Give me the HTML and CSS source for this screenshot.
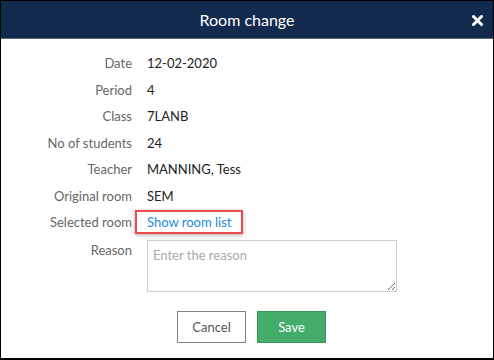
FILE: index.html
```html
<!DOCTYPE html>
<html lang="en">
<head>
    <meta charset="UTF-8">
    <title>Room change</title>
    <link rel="stylesheet" href="styles.css">
</head>
<body>

<div class="dialog">
    <div class="header">
        <h2>Room change</h2>
        <span class="close">
            <svg width="11" height="11" viewBox="0 0 11 11">
                <path d="M1.5 1.5 L9.5 9.5 M9.5 1.5 L1.5 9.5" stroke="#fff" stroke-width="3" stroke-linecap="round"/>
            </svg>
        </span>
    </div>
    <form class="details">
        <div class="label">Date</div>
        <div class="value">12-02-2020</div>
        <div class="label">Period</div>
        <div class="value">4</div>
        <div class="label">Class</div>
        <div class="value">7LANB</div>
        <div class="label">No of students</div>
        <div class="value">24</div>
        <div class="label">Teacher</div>
        <div class="value">MANNING, Tess</div>
        <div class="label">Original room</div>
        <div class="value">SEM</div>
        <div class="label">Selected room</div>
        <div class="value"><a href="#" class="room-link">Show room list</a></div>
        <div class="label label-top">Reason</div>
        <div class="value"><textarea placeholder="Enter the reason"></textarea></div>
    </form>
    <div class="buttons">
        <button type="button" class="btn btn-cancel">Cancel</button>
        <button type="button" class="btn btn-save">Save</button>
    </div>
</div>

</body>
</html>
```

FILE: styles.css
```css
body {
    margin: 0;
    padding: 0;
    font-family: Lato, "Open Sans", sans-serif;
    background: #ffffff;
}

.dialog {
    width: 494px;
    height: 360px;
    box-sizing: border-box;
    border: 1px solid #000;
    border-bottom-width: 2px;
    background: #fff;
}

.header {
    height: 37px;
    background: #132a4f;
    border-bottom: 1px solid #5d6674;
    display: flex;
    align-items: center;
    justify-content: center;
    position: relative;
}

.header h2 {
    margin: 0;
    font-size: 16px;
    font-weight: normal;
    color: #fff;
}

.close {
    position: absolute;
    right: 10px;
    top: 14px;
    line-height: 0;
}

.details {
    display: grid;
    grid-template-columns: 131px 250px;
    grid-template-rows: repeat(7, 26.5px) auto;
    column-gap: 15px;
    align-items: center;
    padding-top: 11px;
    font-size: 13px;
}

.label {
    text-align: right;
    color: #666;
}

.label-top {
    align-self: start;
    padding-top: 6px;
}

.value {
    color: #222;
}

.room-link {
    display: inline-block;
    margin-left: -12px;
    padding: 2px 10px;
    border: 2px solid #ef4a4e;
    color: #1c8ae0;
    text-decoration: none;
    box-shadow: 0 1px 4px rgba(0, 0, 0, 0.35);
}

textarea {
    display: block;
    margin-top: 4px;
    width: 250px;
    height: 52px;
    box-sizing: border-box;
    border: 1px solid #cccccc;
    padding: 6px 5px;
    font-family: Lato, sans-serif;
    font-size: 13px;
    resize: vertical;
}

textarea::placeholder {
    color: #aaa;
}

.buttons {
    display: flex;
    justify-content: center;
    gap: 11px;
    padding-left: 9px;
    margin-top: 19px;
}

.btn {
    width: 69px;
    height: 32px;
    font-family: Lato, sans-serif;
    font-size: 13px;
    border-radius: 0;
    cursor: pointer;
}

.btn-cancel {
    background: #fff;
    border: 1px solid #808080;
    color: #555;
}

.btn-save {
    background: #44ac6b;
    border: 1px solid #3a955c;
    color: #fff;
}
```
